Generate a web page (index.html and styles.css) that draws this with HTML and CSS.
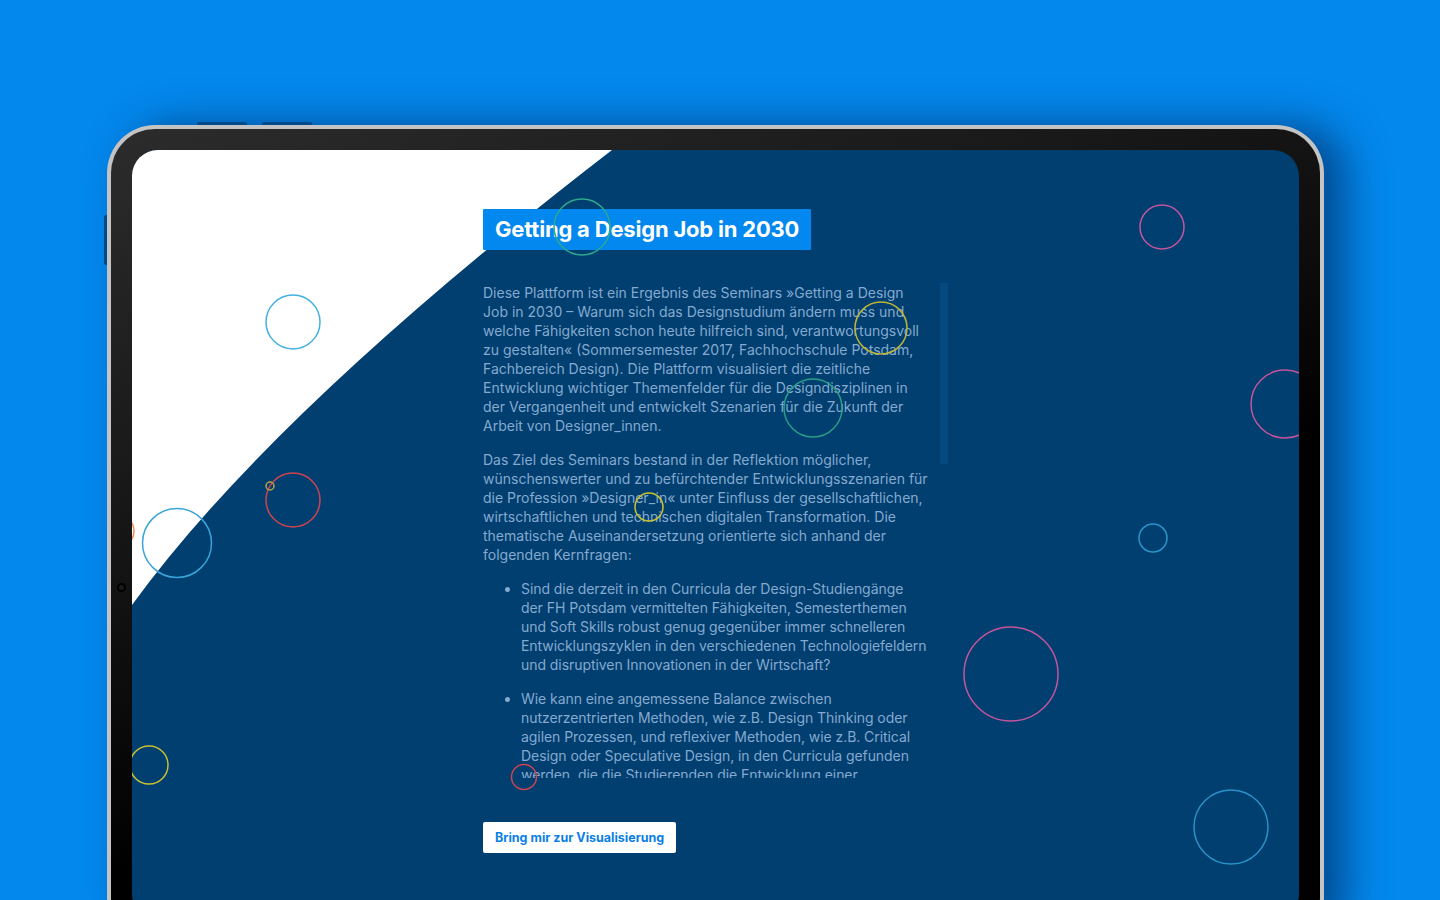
FILE: index.html
```html
<!DOCTYPE html>
<html lang="de">
<head>
<meta charset="utf-8">
<title>Getting a Design Job in 2030</title>
<link rel="stylesheet" href="styles.css">
</head>
<body>
<div class="stage">
  <div class="device">
    <span class="hw hw-top hw-top-1"></span>
    <span class="hw hw-top hw-top-2"></span>
    <span class="hw hw-side"></span>
    <span class="camera"></span>
    <div class="bezel">
      <div class="screen">
        <svg class="backdrop" viewBox="0 0 1167 770" width="1167" height="770" aria-hidden="true">
          <path d="M0 0 H480 Q140 262 0 455 Z" fill="#ffffff"/>
        </svg>
        <main class="content">
          <h1 class="title">Getting a Design Job in 2030</h1>
          <div class="reader">
            <div class="scroller">
              <p>Diese Plattform ist ein Ergebnis des Seminars »Getting a Design Job in 2030 – Warum sich das Designstudium ändern muss und welche Fähigkeiten schon heute hilfreich sind, verantwortungsvoll zu gestalten« (Sommersemester 2017, Fachhochschule Potsdam, Fachbereich Design). Die Plattform visualisiert die zeitliche Entwicklung wichtiger Themenfelder für die Designdisziplinen in der Vergangenheit und entwickelt Szenarien für die Zukunft der Arbeit von Designer_innen.</p>
              <p>Das Ziel des Seminars bestand in der Reflektion möglicher, wünschenswerter und zu befürchtender Entwicklungsszenarien für die Profession »Designer_in« unter Einfluss der gesellschaftlichen, wirtschaftlichen und technischen digitalen Transformation. Die thematische Auseinandersetzung orientierte sich anhand der folgenden Kernfragen:</p>
              <ul>
                <li>Sind die derzeit in den Curricula der Design-Studiengänge der FH Potsdam vermittelten Fähigkeiten, Semesterthemen und Soft Skills robust genug gegenüber immer schnelleren Entwicklungszyklen in den verschiedenen Technologiefeldern und disruptiven Innovationen in der Wirtschaft?</li>
                <li>Wie kann eine angemessene Balance zwischen nutzerzentrierten Methoden, wie z.B. Design Thinking oder agilen Prozessen, und reflexiver Methoden, wie z.B. Critical Design oder Speculative Design, in den Curricula gefunden werden, die die Studierenden die Entwicklung einer eigenständigen Haltung gegenüber gesellschaftlichen Veränderungen ermöglicht?</li>
                <li>Welche Kompetenzen werden Designer_innen in Zukunft benötigen, um in einer zunehmend automatisierten und vernetzten Arbeitswelt verantwortungsvoll gestalten zu können?</li>
              </ul>
              <p>Im Rahmen des Seminars wurden zunächst historische Entwicklungen der Designdisziplinen recherchiert und in einer Zeitleiste zusammengetragen. Auf dieser Grundlage entwickelten die Teilnehmer_innen Szenarien, die mögliche, wahrscheinliche und wünschenswerte Zukünfte der Arbeit von Designer_innen im Jahr 2030 beschreiben.</p>
            </div>
            <div class="scrollbar" aria-hidden="true"><span class="thumb"></span></div>
          </div>
          <a class="cta" href="#">Bring mir zur Visualisierung</a>
        </main>
        <svg class="bubbles" viewBox="0 0 1167 770" width="1167" height="770" aria-hidden="true" fill="none" stroke-width="1.5">
          <circle cx="450" cy="77" r="28" stroke="#2ea88e"/>
          <circle cx="161" cy="172" r="27" stroke="#45b0e0"/>
          <circle cx="1030" cy="77" r="22" stroke="#c4549c"/>
          <circle cx="1153" cy="254" r="34" stroke="#c4549c"/>
          <circle cx="1021" cy="388" r="14" stroke="#2b94cc"/>
          <circle cx="749" cy="178" r="26" stroke="#bdb53a"/>
          <circle cx="681" cy="258" r="29" stroke="#2a9e88"/>
          <circle cx="517" cy="357" r="14" stroke="#c9c232"/>
          <circle cx="161" cy="350" r="27" stroke="#cc4452"/>
          <circle cx="138" cy="336" r="4" stroke="#b8a444"/>
          <circle cx="45" cy="393" r="34.5" stroke="#3aa4d8"/>
          <circle cx="-14" cy="381" r="16" stroke="#f0884a"/>
          <circle cx="17" cy="615" r="19" stroke="#c8c030"/>
          <circle cx="392" cy="627" r="12.5" stroke="#cc4452"/>
          <circle cx="879" cy="524" r="47" stroke="#c4549c"/>
          <circle cx="1099" cy="677" r="37" stroke="#2a92c8"/>
        </svg>
      </div>
    </div>
  </div>
</div>
</body>
</html>
```
FILE: styles.css
```css
html, body {
  margin: 0;
  padding: 0;
}

body {
  background: #0388ed;
  overflow: hidden;
  height: 900px;
  font-family: Inter, "Liberation Sans", sans-serif;
}

.stage {
  padding: 125px 0 0 107px;
}

.device {
  position: relative;
  width: 1217px;
  height: 820px;
  box-sizing: border-box;
  padding: 4px;
  border-radius: 48px;
  background: #c4c4c4;
  box-shadow: 22px 0 40px rgba(0, 25, 70, 0.55);
}

.hw {
  position: absolute;
  background: #004a8a;
}

.hw-top {
  top: -3px;
  width: 50px;
  height: 3px;
  border-radius: 2px 2px 0 0;
}

.hw-top-1 { left: 90px; }
.hw-top-2 { left: 155px; }

.hw-side {
  left: -3px;
  top: 90px;
  width: 3px;
  height: 50px;
  border-radius: 2px 0 0 2px;
}

.camera {
  position: absolute;
  left: 10px;
  top: 458px;
  width: 5px;
  height: 5px;
  border: 2px solid #000;
  border-radius: 50%;
  background: #1c1c1c;
  z-index: 2;
}

.bezel {
  height: 100%;
  box-sizing: border-box;
  padding: 21px;
  border-radius: 44px;
  background: linear-gradient(160deg, #2c2c2c 0%, #141414 35%, #000 60%);
}

.screen {
  position: relative;
  height: 100%;
  border-radius: 26px;
  overflow: hidden;
  background: #003f6f;
}

.backdrop,
.bubbles {
  position: absolute;
  left: 0;
  top: 0;
  pointer-events: none;
}

.bubbles {
  z-index: 3;
  overflow: visible;
}

.content {
  position: relative;
  z-index: 1;
  display: flex;
  flex-direction: column;
  align-items: flex-start;
  padding: 59px 0 0 351px;
}

.title {
  margin: 0;
  padding: 0 12px;
  height: 41px;
  line-height: 41px;
  background: #0288ee;
  color: #fff;
  font-size: 22px;
  font-weight: 700;
  letter-spacing: -0.2px;
  border-radius: 1px;
}

.reader {
  margin-top: 33px;
  display: flex;
  gap: 12px;
  height: 495px;
}

.scroller {
  width: 445px;
  height: 100%;
  overflow: hidden;
  color: #86a9cf;
  font-size: 14px;
  line-height: 19px;
}

.scroller p {
  margin: 0 0 15px;
}

.scroller ul {
  margin: 0 0 15px;
  padding-left: 38px;
}

.scroller li {
  margin-bottom: 15px;
  letter-spacing: -0.06px;
}

.scrollbar {
  width: 8px;
  height: 100%;
}

.thumb {
  display: block;
  height: 181px;
  background: #05497e;
}

.cta {
  margin-top: 44px;
  padding: 0 12px;
  height: 31px;
  line-height: 31px;
  background: #fff;
  color: #0a7fe6;
  font-size: 12.5px;
  font-weight: 700;
  text-decoration: none;
  border-radius: 2px;
}
```
